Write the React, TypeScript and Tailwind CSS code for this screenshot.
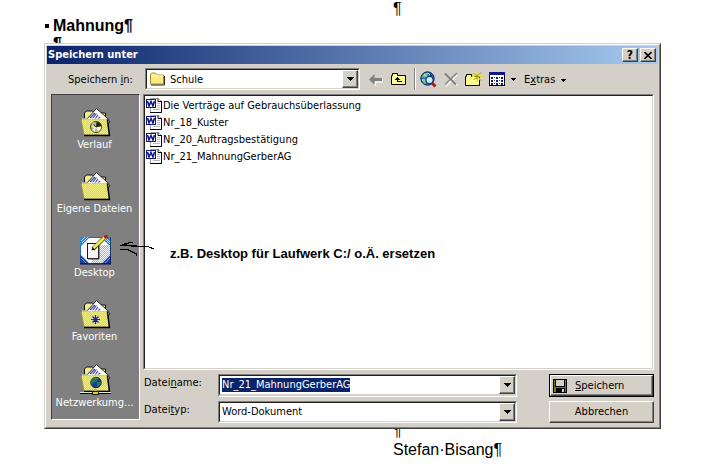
import React, { useState } from 'react';

const ui = "font-['DejaVu_Sans_Condensed','DejaVu_Sans',sans-serif] text-[11px] leading-[14px]";
const sunken = 'border border-t-[#808080] border-l-[#808080] border-r-white border-b-white';
const sunkenInner = 'border border-t-[#202020] border-l-[#202020] border-r-[#d4d0c8] border-b-[#d4d0c8]';
const raised =
  'bg-[#d4d0c8] border border-t-white border-l-white border-r-[#404040] border-b-[#404040] shadow-[inset_-1px_-1px_0_#808080]';

type Emblem = 'history' | 'none' | 'star' | 'network';

function FolderIcon({ emblem }: { emblem: Emblem }) {
  const height = emblem === 'network' ? 34 : 32;
  return (
    <svg width="32" height={height} viewBox={`0 0 32 ${height}`} aria-hidden="true">
      <defs>
        <pattern id="folder-dither" width="2" height="2" patternUnits="userSpaceOnUse">
          <rect width="2" height="2" fill="#f0ec80" />
          <rect width="1" height="1" fill="#dcd850" />
          <rect x="1" y="1" width="1" height="1" fill="#dcd850" />
        </pattern>
      </defs>
      <path d="M5.500 13V7l2-2h6l2 2h11v7z" fill="#f0ec90" stroke="#111" />
      <path d="M7 14L17.500 2.500L28 12L31 16l-3 2z" fill="#fff" stroke="#111" strokeWidth=".9" />
      <path d="M11 12l5-5M13.500 12.500l4-5M16 13l3-4M19 13l2-2" stroke="#2830b8" strokeWidth="1.100" />
      <path d="M2 13.500h26l2 15.500H5z" fill="url(#folder-dither)" stroke="#8c8830" strokeWidth=".8" />
      <path d="M3 13h25" stroke="#ffffc8" />
      <path d="M28.500 13.500l2 16H5" fill="none" stroke="#000" strokeWidth="1.400" />
      {emblem === 'history' && (
        <g>
          <circle cx="17" cy="21" r="5.500" fill="#c0bc70" stroke="#444420" />
          <path d="M17 21l-4-3 1-2zM17 21l5 0a5 5 0 0 1-2 4z" fill="#fff" />
          <path d="M17 21l.5-5a5 5 0 0 1 5 3.500z" fill="#202018" />
          <path d="M12.500 20.500l4 1-3 3M16 22l-1 4M18 22l1 3.500" fill="none" stroke="#fff" />
          <path d="M14 17.500l3 3.500 4-1" fill="none" stroke="#303020" />
        </g>
      )}
      {emblem === 'star' && (
        <path d="M16.500 17v9M12 21.500h9M13.500 18.500l6 6M19.500 18.500l-6 6" stroke="#1820c0" strokeWidth="1.200" />
      )}
      {emblem === 'network' && (
        <g>
          <circle cx="17" cy="20.500" r="5.200" fill="#1c3c98" stroke="#102050" />
          <path d="M13 17l3-2 3 1-1 3-3 1-2 3-1-3zM18 20l4 0-1 3-3 2z" fill="#208048" />
          <path d="M1 31.500h31" stroke="#000" />
          <path d="M1 30.500h31" stroke="#e8e8e0" />
          <path d="M16.500 27v3" stroke="#c8c030" strokeWidth="2" />
          <rect x="13.500" y="29.500" width="6" height="3" fill="#d8d040" stroke="#202000" />
        </g>
      )}
    </svg>
  );
}

function DesktopIcon() {
  return (
    <svg width="32" height="32" viewBox="0 0 32 32" aria-hidden="true">
      <defs>
        <pattern id="desk-dither" width="2" height="2" patternUnits="userSpaceOnUse">
          <rect width="2" height="2" fill="#fff" />
          <rect width="1" height="1" fill="#b0b0b8" />
          <rect x="1" y="1" width="1" height="1" fill="#b0b0b8" />
        </pattern>
      </defs>
      <rect x="1" y="3" width="31" height="27" fill="#2868b8" />
      <path d="M1 12L10 3H1zM32 12l-9-9h9z" fill="#3088c8" />
      <path d="M3 9l6-6M2 7l4-4M27 4l4 4M25 4l6 6" stroke="#a0e0f0" />
      <path d="M1 21l9 9H1zM32 21l-9 9h9z" fill="#1c3c98" />
      <path d="M2 24l5 5M26 29l5-5" stroke="#58a8d8" />
      <path d="M10 4h13l8 8v9l-8 8H10l-8-8v-9z" fill="#fff" />
      <path d="M18 11h13v10l-8 8H12z" fill="url(#desk-dither)" />
      <path d="M1 30h31V3" fill="none" stroke="#000840" />
      <rect x="8.500" y="9.500" width="11" height="15" fill="#f8f8f8" stroke="#181818" />
      <path d="M20 10v15H9" fill="none" stroke="#404040" />
      <path d="M14 15L25 4" stroke="#5a4c00" strokeWidth="4" />
      <path d="M14.500 14L25.500 3.500" stroke="#f4e858" strokeWidth="2.600" />
      <circle cx="27" cy="2.800" r="2" fill="#c01818" />
      <path d="M12.500 16.500l1-3 2 2z" fill="#000" />
    </svg>
  );
}

function SmallFolder() {
  return (
    <svg width="17" height="16" viewBox="0 0 17 16" aria-hidden="true">
      <path d="M1.500 13V3.500l1-1.500h4l2 2h6V13z" fill="#fbea80" stroke="#a89030" />
      <path d="M3 5h11" stroke="#fffbd0" />
      <path d="M15.500 5v9H2" fill="none" stroke="#302808" />
    </svg>
  );
}

function WordIcon() {
  return (
    <svg width="16" height="16" viewBox="0 0 16 16" className="shrink-0" aria-hidden="true">
      <path d="M4.500.5h8l3 3v11h-11z" fill="#fff" stroke="#a0a0a0" />
      <path d="M12 .5v3h4M15.500 3.500v11H4" fill="none" stroke="#000" />
      <path d="M11 5.500h3M11 7.500h3M11 9.500h3M7 11.500h7" stroke="#b8b8c0" />
      <rect x=".5" y="1.500" width="9" height="8" fill="#fff" stroke="#101880" />
      <path d="M1.500 3l1.500 5 2-4.500 2 4.500 1.500-5" fill="none" stroke="#101880" strokeWidth="1.600" />
    </svg>
  );
}

function BackIcon() {
  return (
    <svg width="16" height="16" viewBox="0 0 16 16" aria-hidden="true">
      <path d="M3 10l4.500 4.500v-3.500h7V8" fill="none" stroke="#fff" />
      <path d="M1 8.500L6.500 3v4H14v3H6.500v4z" fill="#808080" />
    </svg>
  );
}

function UpIcon() {
  return (
    <svg width="16" height="16" viewBox="0 0 16 16" aria-hidden="true">
      <path d="M.5 13.500v-9h1v-2h5v2h8v9z" fill="#ffff90" stroke="#000" />
      <path d="M6.500 6v5M6 10.500h5" stroke="#000" />
      <path d="M3.500 9l3-3 3 3z" fill="#000" />
    </svg>
  );
}

function SearchWebIcon() {
  return (
    <svg width="17" height="17" viewBox="0 0 17 17" aria-hidden="true">
      <circle cx="7.500" cy="7.500" r="6.700" fill="#2878c8" stroke="#102858" />
      <path d="M2 5l3-3 4 0-2 3-3 2zM2 8l3 1 1 3-2 1z" fill="#80c860" />
      <path d="M9 2l3 1 1 3-3-1z" fill="#184880" />
      <path d="M4 3l3 3M8 2l2 2M2 9h4" stroke="#b0e8f8" />
      <circle cx="9.500" cy="9" r="3.600" fill="#c8f4fc" stroke="#183868" strokeWidth="1.200" />
      <path d="M12 12l3.500 3.500" stroke="#b01818" strokeWidth="3" />
    </svg>
  );
}

function DeleteIcon() {
  return (
    <svg width="16" height="16" viewBox="0 0 16 16" aria-hidden="true">
      <path d="M3 3l11 11M14 4L3 15" stroke="#fff" strokeWidth="1.500" />
      <path d="M2 2.500l11 11" stroke="#808080" strokeWidth="2" />
      <path d="M14 2L2 13.500" stroke="#808080" strokeWidth="1.400" />
    </svg>
  );
}

function NewFolderIcon() {
  return (
    <svg width="18" height="17" viewBox="0 0 18 17" aria-hidden="true">
      <path d="M.5 14.500V5.500h1v-2h5v2h8v9z" fill="#ffff90" stroke="#000" />
      <path d="M12 0v11M7 5.500h11M8.500 2l7 7M15.500 2l-7 7" stroke="#e8e030" strokeWidth="1.600" />
      <path d="M12 3v5M9.500 5.500h5M14 3.500l2-2M14 7.500l2 2M10 3.500l-1-1M10 7.500l-1 1" stroke="#807830" strokeWidth=".8" />
    </svg>
  );
}

function ViewIcon() {
  return (
    <svg width="17" height="16" viewBox="0 0 17 16" shapeRendering="crispEdges" aria-hidden="true">
      <rect x=".5" y="1.500" width="15" height="13" fill="#fff" stroke="#000" />
      <rect x="0" y="1" width="16" height="3" fill="#101880" />
      <path d="M2 6.500h2M7 6.500h2M12 6.500h2M2 9.500h2M7 9.500h2M12 9.500h2M2 12.500h2M7 12.500h2M12 12.500h2" stroke="#101880" strokeWidth="2" />
      <path d="M5 6.500h1M10 6.500h1M5 9.500h1M10 9.500h1M5 12.500h1M10 12.500h1" stroke="#404040" />
    </svg>
  );
}

function DiskIcon() {
  return (
    <svg width="14" height="14" viewBox="0 0 14 14" shapeRendering="crispEdges" aria-hidden="true">
      <rect width="14" height="14" fill="#000" />
      <rect x="1" y="1" width="12" height="12" fill="#787818" />
      <rect x="2" y="0" width="10" height="8" fill="#000" />
      <rect x="3" y="1" width="8" height="6" fill="#d4d0c8" />
      <rect x="3" y="9" width="9" height="5" fill="#000" />
      <rect x="9" y="10" width="2" height="3" fill="#d4d0c8" />
    </svg>
  );
}

function Triangle({ small = false }: { small?: boolean }) {
  return small ? (
    <svg width="5" height="3" viewBox="0 0 5 3" shapeRendering="crispEdges" aria-hidden="true"><path d="M0 0h5v1H0zM1 1h3v1H1zM2 2h1v1H2z" /></svg>
  ) : (
    <svg width="7" height="4" viewBox="0 0 7 4" shapeRendering="crispEdges" aria-hidden="true"><path d="M0 0h7v1H0zM1 1h5v1H1zM2 2h3v1H2zM3 3h1v1H3z" /></svg>
  );
}

function DropArrow() {
  return (
    <span className={`w-4 shrink-0 flex items-center justify-center pointer-events-none ${raised}`}>
      <Triangle />
    </span>
  );
}

function Combo({ children }: { children: React.ReactNode }) {
  return (
    <div className={`min-w-0 ${sunken}`}>
      <div className={`h-5 flex items-stretch bg-white ${sunkenInner}`}>{children}</div>
    </div>
  );
}

const places = [
  { label: 'Verlauf', icon: <FolderIcon emblem="history" /> },
  { label: 'Eigene Dateien', icon: <FolderIcon emblem="none" /> },
  { label: 'Desktop', icon: <DesktopIcon /> },
  { label: 'Favoriten', icon: <FolderIcon emblem="star" /> },
  { label: 'Netzwerkumg...', icon: <FolderIcon emblem="network" /> },
];

const files = [
  'Die Verträge auf Gebrauchsüberlassung',
  'Nr_18_Kuster',
  'Nr_20_Auftragsbestätigung',
  'Nr_21_MahnungGerberAG',
];

export default function App() {
  const [fileName, setFileName] = useState('Nr_21_MahnungGerberAG');

  return (
    <div className="min-h-screen bg-white text-black font-['Liberation_Sans',Arial,sans-serif] text-base">
      {/* Document text above the dialog */}
      <div className="h-[43px] overflow-hidden pl-[45px]">
        <p className="pl-[348px] leading-[18px]">¶</p>
        <h1 className="flex items-center gap-1 leading-4 font-bold">
          <span className="size-1 bg-black" />
          Mahnung¶
        </h1>
        <p className="pl-2 pt-0.5 leading-4 font-bold">¶</p>
      </div>

      {/* Save dialog */}
      <div
        role="dialog"
        aria-label="Speichern unter"
        className={`relative ml-11 mr-[57px] border border-t-[#d4d0c8] border-l-[#d4d0c8] border-r-[#404040] border-b-[#404040] ${ui}`}
      >
        <div className="bg-[#d4d0c8] border border-t-white border-l-white border-r-[#808080] border-b-[#808080] p-px">
          <div className="h-[18px] flex items-center gap-0.5 pl-px pr-0.5 bg-linear-to-r/srgb from-[#0a246a] to-[#a6caf0]">
            <h2 className="flex-1 font-bold text-white">Speichern unter</h2>
            <button aria-label="Hilfe" className={`w-4 h-3.5 flex items-center justify-center font-bold text-[12px] leading-3 ${raised}`}>?</button>
            <button aria-label="Schließen" className={`w-4 h-3.5 flex items-center justify-center ${raised}`}>
              <svg width="8" height="7" viewBox="0 0 8 7" aria-hidden="true">
                <path d="M.5 0l7 7M7.500 0l-7 7" stroke="#000" strokeWidth="1.600" />
              </svg>
            </button>
          </div>

          {/* Toolbar */}
          <div className="h-[30px] flex items-center pl-[21px]">
            <label htmlFor="folder" className="w-[77px] pt-0.5">Speichern <u>i</u>n:</label>
            <div className="w-[215px]">
              <Combo>
                <span className="pl-0.5 pt-px"><SmallFolder /></span>
                <select id="folder" className="flex-1 min-w-0 appearance-none bg-transparent pl-1 pt-0.5 outline-none">
                  <option>Schule</option>
                </select>
                <DropArrow />
              </Combo>
            </div>
            <button aria-label="Zurück" className="ml-2"><BackIcon /></button>
            <button aria-label="Übergeordneter Ordner" className="ml-[7px]"><UpIcon /></button>
            <span className="ml-[7px] h-[22px] w-0.5 border-l border-l-[#808080] border-r border-r-white" />
            <button aria-label="Im Web suchen" className="ml-1"><SearchWebIcon /></button>
            <button aria-label="Löschen" className="ml-1.5"><DeleteIcon /></button>
            <button aria-label="Neuer Ordner" className="ml-1.5"><NewFolderIcon /></button>
            <button aria-label="Ansichten" className="ml-1.5 flex items-center gap-[5px]">
              <ViewIcon />
              <Triangle small />
            </button>
            <button className="ml-2 pt-0.5 flex items-center gap-1.5">
              <span>E<u>x</u>tras</span>
              <Triangle small />
            </button>
          </div>

          <div className="flex items-start gap-[3px] px-1 pb-[3px]">
            {/* Places bar */}
            <nav className="h-[326px] w-[89px] shrink-0 bg-[#808080] pt-[11px] pr-0.5 flex flex-col gap-[18px] border border-t-[#404040] border-l-[#404040] border-r-white border-b-white">
              {places.map((place) => (
                <button key={place.label} className="flex flex-col items-center text-white whitespace-nowrap">
                  {place.icon}
                  {place.label}
                </button>
              ))}
            </nav>

            <div className="flex-1 min-w-0">
              <div className={sunken}>
                <ul className={`h-[274px] pt-px bg-white ${sunkenInner}`}>
                  {files.map((file) => (
                    <li key={file} className="h-[17px] flex items-center gap-px pl-px">
                      <WordIcon />
                      {file}
                    </li>
                  ))}
                </ul>
              </div>

              <div className="pt-1 flex justify-between gap-8">
                <div className="flex-1 min-w-0 grid grid-cols-[73px_1fr] gap-y-1 gap-x-0.5">
                  <label htmlFor="file-name" className="pt-0.5 pl-px">Datei<u>n</u>ame:</label>
                  <Combo>
                    <div className="flex-1 min-w-0 flex items-center pl-0.5">
                      <input
                        id="file-name"
                        value={fileName}
                        onChange={(e) => setFileName(e.target.value)}
                        className="field-sizing-content h-3.5 bg-[#0a246a] text-white outline-none"
                      />
                    </div>
                    <DropArrow />
                  </Combo>
                  <label htmlFor="file-type" className="pt-0.5 pl-px">Datei<u>t</u>yp:</label>
                  <Combo>
                    <select id="file-type" className="flex-1 min-w-0 appearance-none bg-transparent pl-0.5 outline-none">
                      <option>Word-Dokument</option>
                    </select>
                    <DropArrow />
                  </Combo>
                </div>
                <div className="w-[105px] flex flex-col gap-1">
                  <button className="border border-black">
                    <span className={`h-[21px] flex items-center gap-2 pl-0.5 ${raised}`}>
                      <DiskIcon />
                      <span><u>S</u>peichern</span>
                    </span>
                  </button>
                  <button className={`h-[22px] ${raised}`}>Abbrechen</button>
                </div>
              </div>
            </div>
          </div>
        </div>

        {/* Hand-drawn note on top of the dialog */}
        <div className="absolute left-[74px] top-[197px] flex items-start gap-[15px] pointer-events-none">
          <svg width="36" height="18" viewBox="0 0 36 18" shapeRendering="crispEdges" aria-hidden="true">
            <path d="M1 4.500h17M12 5.500h18M30 6.500h3M32 7.500h3M3 3.500h5M5 2.500h5M9 1.500h5M1 8.500h9M9 9.500h3M11 10.500h3M13 11.500h3M15 12.500h2M17.500 12v3" stroke="#000" />
          </svg>
          <p className="pt-[5px] font-['Liberation_Sans',Arial,sans-serif] text-[13px] leading-4 font-bold whitespace-nowrap">
            z.B. Desktop für Laufwerk C:/ o.Ä. ersetzen
          </p>
        </div>
      </div>

      {/* Document text below the dialog */}
      <div className="pl-[393px]">
        <p className="h-2.5 flex items-end overflow-hidden leading-4">¶</p>
        <p className="leading-[22px]">Stefan·Bisang¶</p>
      </div>
    </div>
  );
}
